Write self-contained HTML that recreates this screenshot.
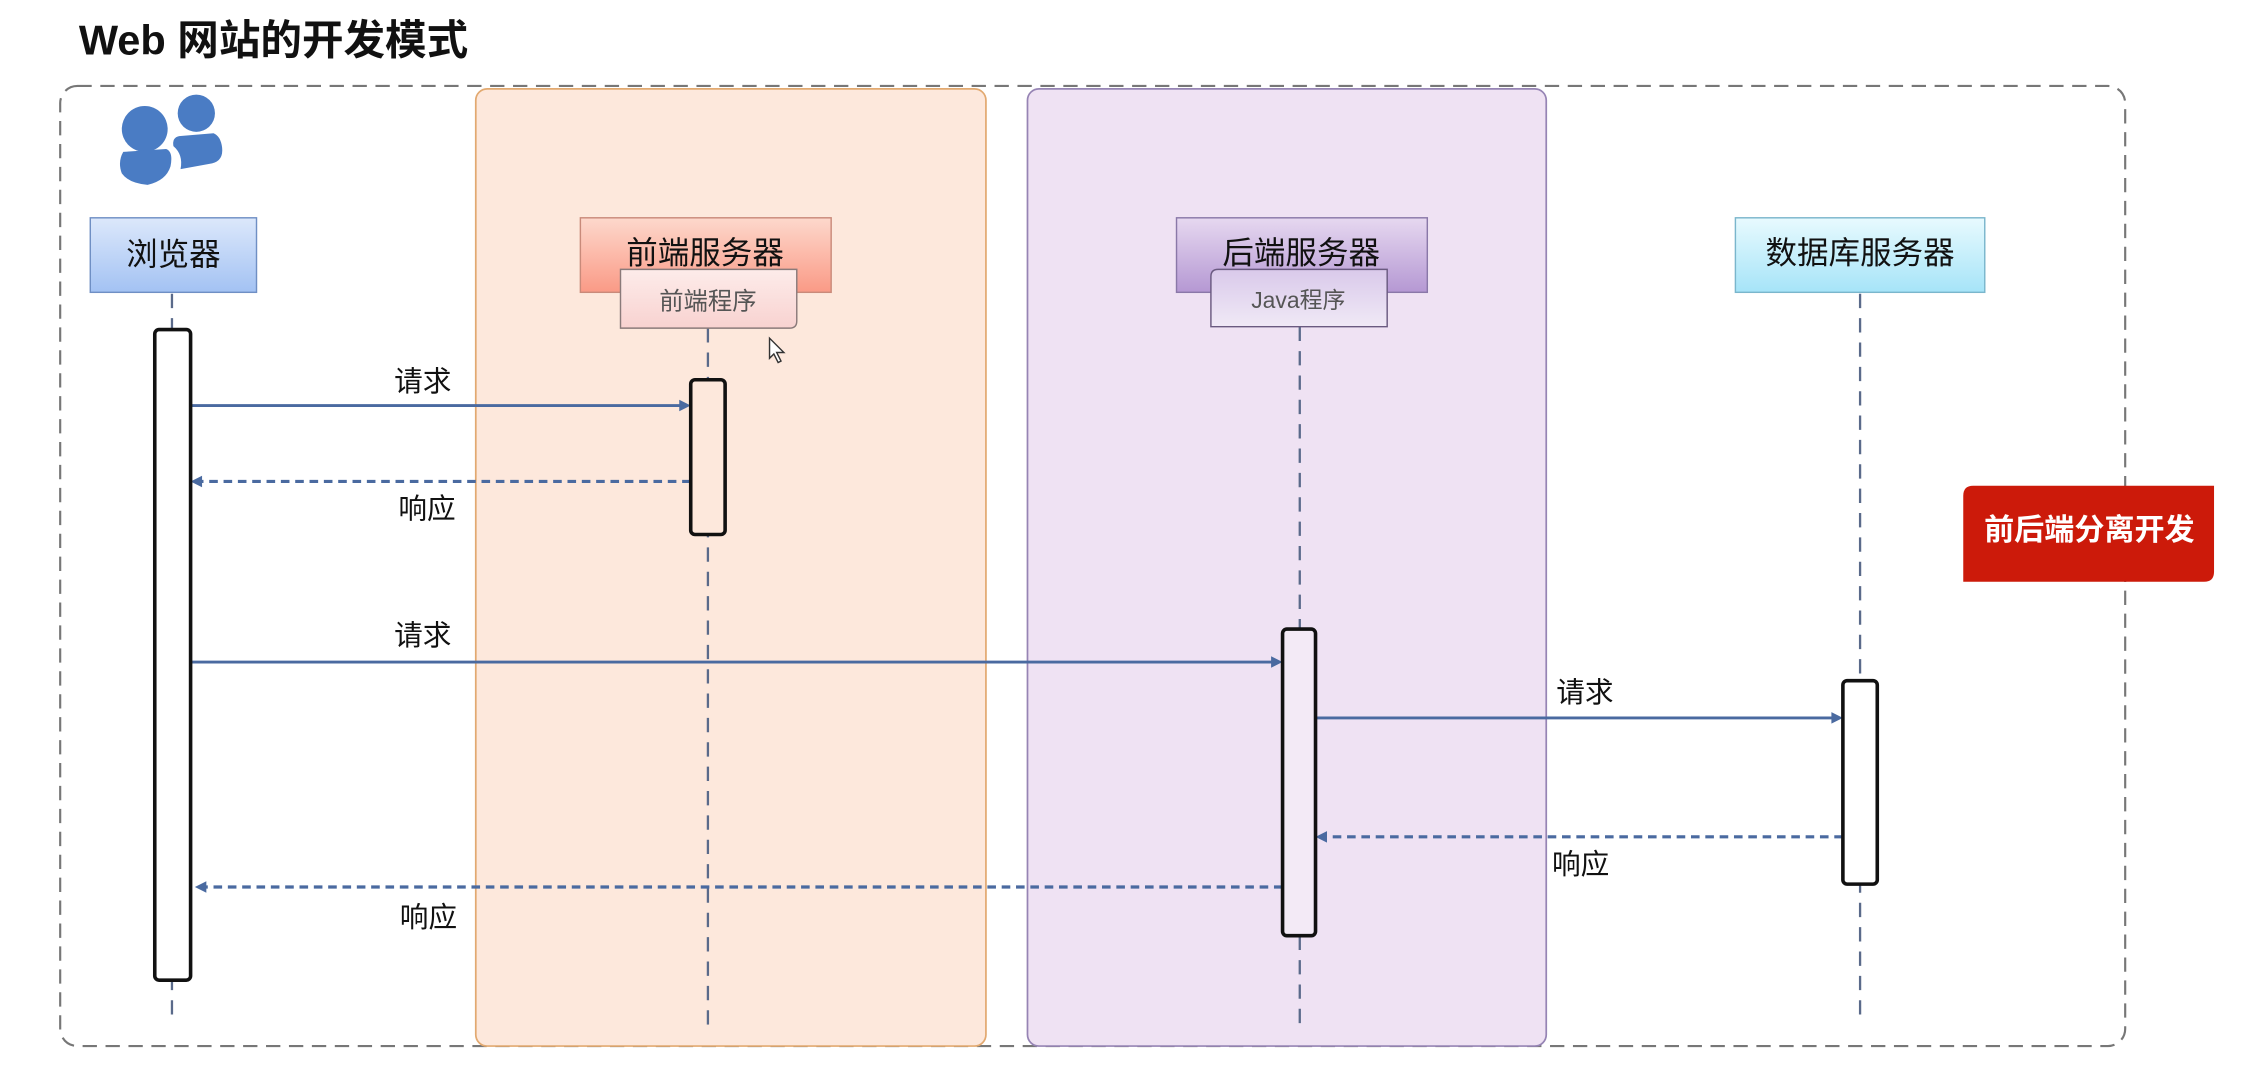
<!DOCTYPE html>
<html><head><meta charset="utf-8"><style>
html,body{margin:0;padding:0;background:#fff;width:2247px;height:1071px;overflow:hidden}
svg text{font-family:"Liberation Sans","Noto Sans CJK SC",sans-serif}
</style></head><body>
<svg width="2247" height="1071" viewBox="0 0 1568 747.4" preserveAspectRatio="none" xmlns="http://www.w3.org/2000/svg">
<defs>
<linearGradient id="gb" x1="0" y1="0" x2="0" y2="1"><stop offset="0" stop-color="#dce8fb"/><stop offset="1" stop-color="#a3c2f3"/></linearGradient>
<linearGradient id="go" x1="0" y1="0" x2="0" y2="1"><stop offset="0" stop-color="#fdd8cc"/><stop offset="1" stop-color="#fa9a86"/></linearGradient>
<linearGradient id="gp" x1="0" y1="0" x2="0" y2="1"><stop offset="0" stop-color="#e6d8f0"/><stop offset="1" stop-color="#b598d3"/></linearGradient>
<linearGradient id="gc" x1="0" y1="0" x2="0" y2="1"><stop offset="0" stop-color="#e8fafe"/><stop offset="1" stop-color="#a6e4f8"/></linearGradient>
<linearGradient id="go2" x1="0" y1="0" x2="0" y2="1"><stop offset="0" stop-color="#fdecea"/><stop offset="1" stop-color="#f8d2d0"/></linearGradient>
<linearGradient id="gp2" x1="0" y1="0" x2="0" y2="1"><stop offset="0" stop-color="#d9c9ea"/><stop offset="1" stop-color="#f0e9f6"/></linearGradient>
</defs>
<text x="55" y="38" font-size="29" font-weight="bold" fill="#111">Web 网站的开发模式</text>
<rect x="42" y="60" width="1441" height="670" rx="12" fill="none" stroke="#777" stroke-width="1.5" stroke-dasharray="10,6"/>
<rect x="332" y="62" width="356" height="668" rx="8" fill="#fde8dc" stroke="#e2a970" stroke-width="1.2"/>
<rect x="717" y="62" width="362" height="668" rx="8" fill="#efe2f3" stroke="#9684b4" stroke-width="1.2"/>
<!-- users icon -->
<g fill="#4a7cc4">
<circle cx="101" cy="90" r="16"/><circle cx="137" cy="79" r="13"/>
<path d="M86 106 L116 104 Q121 106 119 116 Q116 126 103 129 Q90 128 85 121 Q82 113 86 106Z"/>
<path d="M125 95 L149 93 Q154 95 155 103 Q156 112 148 114 L126 118 Q128 108 121 102 Q120 96 125 95Z"/>
</g>
<!-- lifelines -->
<g stroke="#5a6a8a" stroke-width="1.6" stroke-dasharray="10,7" fill="none">
<line x1="120" y1="205" x2="120" y2="715"/>
<line x1="494" y1="229" x2="494" y2="715"/>
<line x1="907" y1="228" x2="907" y2="715"/>
<line x1="1298" y1="205" x2="1298" y2="715"/>
</g>
<!-- header boxes -->
<rect x="63" y="152" width="116" height="52" fill="url(#gb)" stroke="#6f8fc4"/>
<text x="121" y="185" font-size="22" text-anchor="middle" fill="#111">浏览器</text>
<rect x="405" y="152" width="175" height="52" fill="url(#go)" stroke="#c98a7a"/>
<text x="492" y="184" font-size="22" text-anchor="middle" fill="#111">前端服务器</text>
<path d="M433 188 H556 V224 Q556 229 551 229 H433Z" fill="url(#go2)" stroke="#8a7a7a"/>
<text x="494" y="216" font-size="17" text-anchor="middle" fill="#555">前端程序</text>
<rect x="821" y="152" width="175" height="52" fill="url(#gp)" stroke="#8a78a8"/>
<text x="908" y="184" font-size="22" text-anchor="middle" fill="#111">后端服务器</text>
<path d="M845 193 Q845 188 850 188 H968 V228 H845Z" fill="url(#gp2)" stroke="#6a5a80"/>
<text x="906" y="215" font-size="16" text-anchor="middle" fill="#555">Java程序</text>
<rect x="1211" y="152" width="174" height="52" fill="url(#gc)" stroke="#7ab6cc"/>
<text x="1298" y="184" font-size="22" text-anchor="middle" fill="#111">数据库服务器</text>
<!-- arrows -->
<g stroke="#4a6aa0" stroke-width="2" fill="none">
<line x1="133" y1="283" x2="476" y2="283"/>
<line x1="133" y1="462" x2="889" y2="462"/>
<line x1="918" y1="501" x2="1280" y2="501"/>
</g>
<g stroke="#4a6aa0" stroke-width="2.2" fill="none" stroke-dasharray="6,4">
<line x1="482" y1="336" x2="140" y2="336"/>
<line x1="1286" y1="584" x2="925" y2="584"/>
<line x1="895" y1="619" x2="143" y2="619"/>
</g>
<g fill="#4a6aa0">
<path d="M482 283 L474 279 L474 287Z"/><path d="M895 462 L887 458 L887 466Z"/><path d="M1286 501 L1278 497 L1278 505Z"/>
<path d="M133 336 L141 332 L141 340Z"/><path d="M918 584 L926 580 L926 588Z"/><path d="M136 619 L144 615 L144 623Z"/>
</g>
<g font-size="20" fill="#111">
<text x="275" y="273">请求</text><text x="278" y="362">响应</text>
<text x="275" y="450">请求</text><text x="1086" y="490">请求</text>
<text x="1083" y="610">响应</text><text x="279" y="647">响应</text>
</g>
<!-- activation bars -->
<g stroke="#111" stroke-width="2.5">
<rect x="108" y="230" width="25" height="454" rx="3" fill="#fff"/>
<rect x="482" y="265" width="24" height="108" rx="3" fill="#fde8dc"/>
<rect x="895" y="439" width="23" height="214" rx="3" fill="#f3eaf6"/>
<rect x="1286" y="475" width="24" height="142" rx="3" fill="#fff"/>
</g>
<!-- red label -->
<path d="M1377 339 H1545 V399 Q1545 406 1538 406 H1370 V346 Q1370 339 1377 339Z" fill="#cc1a0a"/>
<text x="1458" y="377" font-size="21" font-weight="bold" text-anchor="middle" fill="#fff">前后端分离开发</text>
<!-- cursor -->
<path d="M537 236 L537 250 L540 247 L543 253 L545 252 L542 246 L547 246Z" fill="#fff" stroke="#333" stroke-width="1"/>
</svg>
</body></html>
